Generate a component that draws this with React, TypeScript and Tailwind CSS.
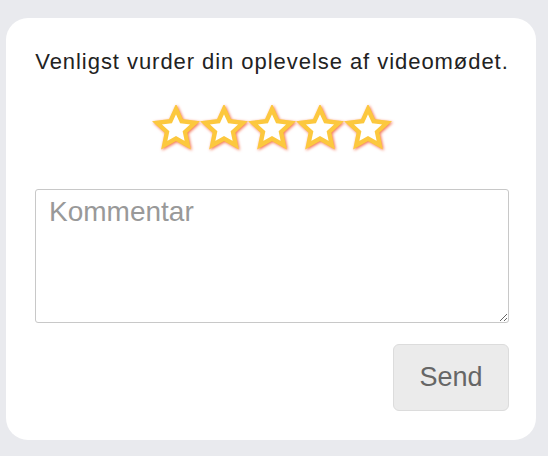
import React from 'react'

function Star() {
  return (
    <svg width="48" height="46" viewBox="0 0 48 46" className="[filter:drop-shadow(1.5px_1.5px_1.5px_#f5704f)]">
      <polygon
        points="24,4 29.58,16.31 43.02,17.82 33.03,26.94 35.76,40.18 24,33.5 12.24,40.18 14.97,26.94 4.98,17.82 18.42,16.31"
        fill="#ffffff"
        stroke="#fcc83e"
        strokeWidth="4.4"
        strokeLinejoin="miter"
      />
    </svg>
  )
}

export default function App() {
  return (
    <div className="w-[548px] h-[456px] bg-[#e9eaee] pt-[18px] pl-[6px] font-['Liberation_Sans',Arial,sans-serif]">
      <div className="w-[530px] h-[422px] bg-white rounded-[22px] pl-[29px] pr-[27px] pt-[32px] flex flex-col">
        <p className="text-center whitespace-nowrap text-[22px] leading-[24px] tracking-[0.95px] text-[#222]">
          Venligst vurder din oplevelse af videomødet.
        </p>
        <div className="flex justify-center mt-[31px]">
          {[0, 1, 2, 3, 4].map((i) => (
            <Star key={i} />
          ))}
        </div>
        <textarea
          placeholder="Kommentar"
          className="mt-[38px] h-[134px] w-full border border-[#c8c8c8] rounded-[3px] px-[13px] py-[6px] text-[28px] leading-[32px] text-[#333] placeholder:text-[#999] outline-none"
        />
        <div className="flex justify-end mt-[21px]">
          <button className="w-[116px] h-[67px] bg-[#ebebeb] border border-[#dcdcdc] rounded-[6px] text-[27px] text-[#666]">
            Send
          </button>
        </div>
      </div>
    </div>
  )
}
